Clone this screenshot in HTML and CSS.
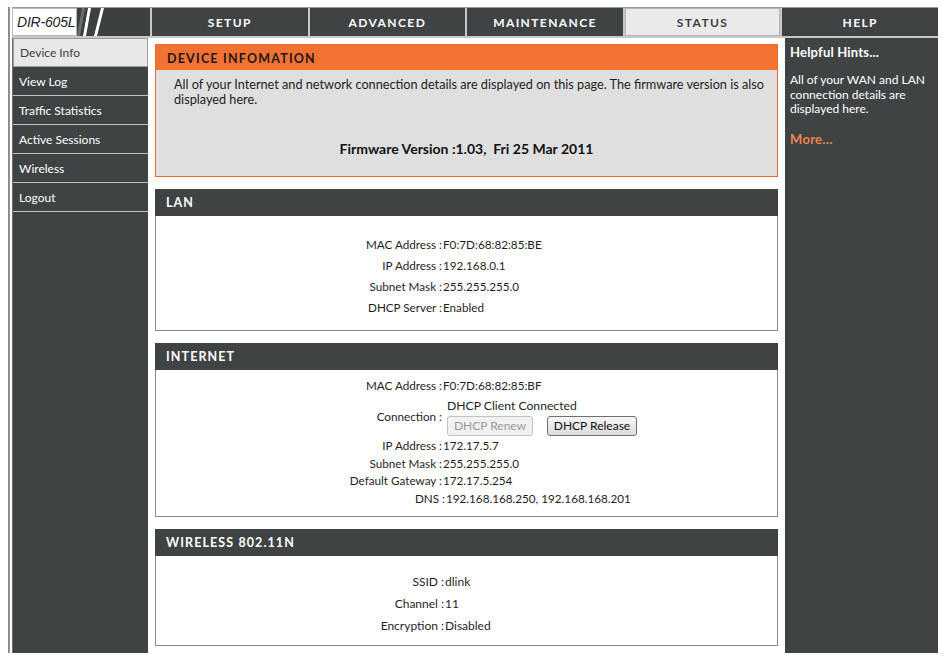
FILE: index.html
```html
<!DOCTYPE html>
<html lang="en">
<head>
<meta charset="utf-8">
<title>D-LINK SYSTEMS, INC. | WIRELESS ROUTER | STATUS</title>
<link rel="stylesheet" href="styles.css">
</head>
<body>
<div class="frame">
  <header class="topbar">
    <div class="brand">
      <span class="model">DIR-605L</span>
      <svg class="brand-mark" viewBox="0 0 71 28" width="71" height="28" aria-hidden="true">
        <rect x="0" y="0" width="71" height="28" fill="#3d4041"/>
        <polygon points="0,28 3,28 8,0 5,0" fill="#6b6e6f"/>
        <polygon points="6,28 9,28 14,0 11,0" fill="#ffffff"/>
        <polygon points="17,28 20,28 27,0 24,0" fill="#ffffff"/>
      </svg>
    </div>
    <a class="tab">SETUP</a>
    <a class="tab">ADVANCED</a>
    <a class="tab">MAINTENANCE</a>
    <a class="tab tab-active">STATUS</a>
    <a class="tab">HELP</a>
  </header>

  <div class="layout">
    <nav class="sidenav">
      <a class="navitem navitem-active">Device Info</a>
      <a class="navitem">View Log</a>
      <a class="navitem">Traffic Statistics</a>
      <a class="navitem">Active Sessions</a>
      <a class="navitem">Wireless</a>
      <a class="navitem">Logout</a>
    </nav>

    <main class="content">
      <section class="intro">
        <h2 class="intro-title">DEVICE INFOMATION</h2>
        <div class="intro-body">
          <p class="intro-text">All of your Internet and network connection details are displayed on this page. The firmware version is also displayed here.</p>
          <p class="firmware">Firmware Version :1.03,&nbsp; Fri 25 Mar 2011</p>
        </div>
      </section>

      <section class="box">
        <h2 class="box-title">LAN</h2>
        <div class="box-body lan">
          <div class="row"><span class="label">MAC Address :</span><span class="value">F0:7D:68:82:85:BE</span></div>
          <div class="row"><span class="label">IP Address :</span><span class="value">192.168.0.1</span></div>
          <div class="row"><span class="label">Subnet Mask :</span><span class="value">255.255.255.0</span></div>
          <div class="row"><span class="label">DHCP Server :</span><span class="value">Enabled</span></div>
        </div>
      </section>

      <section class="box">
        <h2 class="box-title">INTERNET</h2>
        <div class="box-body wan">
          <div class="row"><span class="label">MAC Address :</span><span class="value">F0:7D:68:82:85:BF</span></div>
          <div class="row row-conn">
            <span class="label">Connection :</span>
            <div class="value conn">
              <span class="conn-state">DHCP Client Connected</span>
              <div class="buttons">
                <button class="btn btn-renew" disabled>DHCP Renew</button>
                <button class="btn btn-release">DHCP Release</button>
              </div>
            </div>
          </div>
          <div class="row"><span class="label">IP Address :</span><span class="value">172.17.5.7</span></div>
          <div class="row"><span class="label">Subnet Mask :</span><span class="value">255.255.255.0</span></div>
          <div class="row"><span class="label">Default Gateway :</span><span class="value">172.17.5.254</span></div>
          <div class="row row-dns"><span class="label">DNS :</span><span class="value">192.168.168.250, 192.168.168.201</span></div>
        </div>
      </section>

      <section class="box">
        <h2 class="box-title">WIRELESS 802.11N</h2>
        <div class="box-body wlan">
          <div class="row"><span class="label">SSID :</span><span class="value">dlink</span></div>
          <div class="row"><span class="label">Channel :</span><span class="value">11</span></div>
          <div class="row"><span class="label">Encryption :</span><span class="value">Disabled</span></div>
        </div>
      </section>
    </main>

    <aside class="hints">
      <h3 class="hints-title">Helpful Hints...</h3>
      <p class="hints-text">All of your WAN and LAN connection details are displayed here.</p>
      <a class="hints-more">More...</a>
    </aside>
  </div>
</div>
</body>
</html>
```

FILE: styles.css
```css
* {
  box-sizing: border-box;
}

html, body {
  margin: 0;
  padding: 0;
  background: #ffffff;
}

body {
  padding: 7px 0 0 8px;
  font-family: Lato, "Open Sans", "Liberation Sans", sans-serif;
  font-size: 11.7px;
  color: #1e1e1e;
  overflow: hidden;
}

h2, h3, p {
  margin: 0;
}

a {
  text-decoration: none;
}

.frame {
  width: 930px;
  border-left: 2px solid #8e8e8e;
  padding-left: 2px;
}

/* ---------- top navigation ---------- */
.topbar {
  display: grid;
  grid-template-columns: 138px repeat(5, 1fr);
  grid-template-rows: 28px;
  column-gap: 2px;
  border-top: 1px solid #9a9a9a;
  padding-bottom: 2px;
  background: #c8c8c8;
}

.brand {
  display: flex;
  background: #3d4041;
}

.model {
  width: 65px;
  display: flex;
  align-items: center;
  padding-left: 4px;
  background: #ffffff;
  border: 1px solid #b8b8b8;
  font-family: "Liberation Sans", Arial, sans-serif;
  font-style: italic;
  font-size: 14px;
  letter-spacing: -0.2px;
  color: #222;
}

.brand-mark {
  display: block;
}

.tab {
  display: flex;
  align-items: center;
  justify-content: center;
  background: #404344;
  color: #ffffff;
  font-weight: bold;
  font-size: 12px;
  letter-spacing: 1.4px;
}

.tab-active {
  background: #eaeaea;
  color: #3c3f40;
  border: 1px solid #b4b4b4;
}

/* ---------- three columns ---------- */
.layout {
  display: grid;
  grid-template-columns: 136px 1fr 153px;
  height: 615px;
}

.sidenav {
  display: flex;
  flex-direction: column;
  background: #404344;
  border-left: 1px solid #6a6d6e;
}

.navitem {
  height: 29px;
  display: flex;
  align-items: center;
  padding-left: 6px;
  color: #ffffff;
  font-size: 12px;
  border-bottom: 1px solid #c3c3c3;
}

.navitem-active {
  background: #e8e8e8;
  color: #3d3d3d;
  border: 1px solid #9c9c9c;
}

.content {
  padding: 6px 7px 0 7px;
  display: flex;
  flex-direction: column;
  gap: 12px;
}

/* ---------- orange intro ---------- */
.intro {
  border: 1px solid #ee6a2c;
}

.intro-title {
  height: 25px;
  display: flex;
  align-items: center;
  padding: 1px 0 0 11px;
  background: #f37132;
  color: #1a1a1a;
  font-size: 12.5px;
  letter-spacing: 1.2px;
}

.intro-body {
  height: 106px;
  background: #dfdfdf;
  padding: 7px 10px 0 18px;
}

.intro-text {
  font-size: 12.7px;
  line-height: 15px;
}

.firmware {
  margin-top: 34px;
  text-align: center;
  font-weight: bold;
  font-size: 14px;
  line-height: 16px;
  color: #111;
  padding-right: 8px;
}

/* ---------- status boxes ---------- */
.box-title {
  height: 27px;
  display: flex;
  align-items: center;
  padding-left: 11px;
  background: #404344;
  color: #ffffff;
  font-size: 12.5px;
  letter-spacing: 1.1px;
}

.box-body {
  background: #ffffff;
  border: 1px solid #8a8a8a;
  border-top: none;
}

.row {
  display: grid;
  grid-template-columns: 286px 1fr;
  align-items: center;
}

.label {
  text-align: right;
  white-space: pre;
}

.value {
  padding-left: 1px;
}

.lan {
  height: 115px;
  padding-top: 17px;
}

.lan .row {
  height: 21px;
}

.wan {
  height: 147px;
  padding-top: 6px;
}

.wan .row {
  height: 17.5px;
}

.wan .row-conn {
  height: auto;
  margin: 2px 0 1px;
}

.conn {
  display: flex;
  flex-direction: column;
  padding-left: 5px;
}

.conn-state {
  font-size: 12.2px;
  line-height: 20px;
}

.buttons {
  display: flex;
  gap: 14px;
}

.btn {
  height: 20px;
  padding: 0;
  font-family: Lato, "Open Sans", "Liberation Sans", sans-serif;
  font-size: 12px;
  border-radius: 3px;
}

.btn-renew {
  width: 86px;
  background: #f1f1f1;
  border: 1px solid #c2c2c2;
  color: #9a9a9a;
}

.btn-release {
  width: 90px;
  background: linear-gradient(#f6f6f6, #dcdcdc);
  border: 1px solid #707070;
  color: #111;
}

.wan .row-dns {
  grid-template-columns: 289px 1fr;
}

.wlan {
  height: 90px;
  padding-top: 14px;
  font-size: 12px;
}

.wlan .row {
  height: 22px;
}

.wlan .row {
  grid-template-columns: 288px 1fr;
}

/* ---------- hints column ---------- */
.hints {
  background: #404344;
  color: #ffffff;
  padding: 6px 6px 0 5px;
}

.hints-title {
  font-size: 13px;
  letter-spacing: 0.2px;
  line-height: 16px;
}

.hints-text {
  margin-top: 13px;
  font-size: 12px;
  line-height: 14.5px;
}

.hints-more {
  display: block;
  margin-top: 14px;
  color: #e98650;
  font-weight: bold;
  font-size: 13px;
  letter-spacing: 0.3px;
}
```
